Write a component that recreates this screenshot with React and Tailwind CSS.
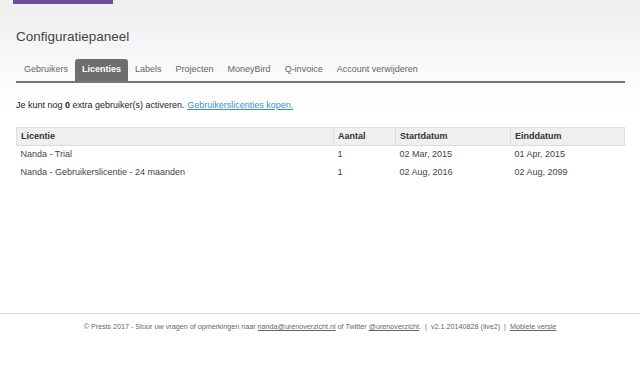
import React from 'react';

const tabs = ['Gebruikers', 'Licenties', 'Labels', 'Projecten', 'MoneyBird', 'Q-invoice', 'Account verwijderen'];

const rows = [
  { name: 'Nanda - Trial', count: '1', start: '02 Mar, 2015', end: '01 Apr, 2015' },
  { name: 'Nanda - Gebruikerslicentie - 24 maanden', count: '1', start: '02 Aug, 2016', end: '02 Aug, 2099' },
];

export default function App() {
  return (
    <div className="w-[640px] h-[380px] overflow-hidden bg-white text-[#333] font-['Liberation_Sans',Arial,sans-serif]">
      <div className="bg-gradient-to-b from-[#efefef] to-white h-[110px] px-4">
        <div className="ml-[-3px] w-[100px] h-[4px] bg-[#6b4c9f]" />
        <h1 className="mt-[24px] text-[13.5px] leading-[18px] text-[#444]">Configuratiepaneel</h1>

        <div className="mt-[14px] flex items-end border-b-2 border-[#777] w-[609px] h-[23px] pl-[1px]">
          {tabs.map((t) =>
            t === 'Licenties' ? (
              <div key={t} className="h-[22px] px-[7px] flex items-center bg-[#6e6e6e] text-white font-bold text-[9px] rounded-t-[3px]">
                {t}
              </div>
            ) : (
              <div key={t} className="h-[22px] px-[7px] flex items-center text-[#666] text-[9px]">
                {t}
              </div>
            )
          )}
        </div>

        <p className="mt-[16px] text-[9px] text-[#222]">
          Je kunt nog <b>0</b> extra gebruiker(s) activeren.{' '}
          <a className="text-[#3a8fd6] underline">Gebruikerslicenties kopen.</a>
        </p>
      </div>

      <div className="px-4 mt-[17px]">
        <table className="w-[609px] text-[9px] border-collapse">
          <thead>
            <tr className="bg-[#efefef] text-[#333] font-bold h-[18px]">
              <td className="border border-[#dcdcdc] pl-[4px] w-[317px]">Licentie</td>
              <td className="border border-[#dcdcdc] pl-[4px] w-[62px]">Aantal</td>
              <td className="border border-[#dcdcdc] pl-[4px] w-[115px]">Startdatum</td>
              <td className="border border-[#dcdcdc] pl-[4px]">Einddatum</td>
            </tr>
          </thead>
          <tbody className="text-[#444]">
            {rows.map((r) => (
              <tr key={r.name} className="h-[18px]">
                <td className="pl-[4px]">{r.name}</td>
                <td className="pl-[4px]">{r.count}</td>
                <td className="pl-[4px]">{r.start}</td>
                <td className="pl-[4px]">{r.end}</td>
              </tr>
            ))}
          </tbody>
        </table>
      </div>

      <div className="mt-[131px] border-t border-[#ddd] pt-[8px] text-center text-[7.2px] text-[#666]">
        © Presis 2017 - Stuur uw vragen of opmerkingen naar <span className="underline">nanda@urenoverzicht.nl</span> of Twitter{' '}
        <span className="underline">@urenoverzicht</span>. &nbsp;| &nbsp;v2.1.20140828 (live2) &nbsp;| &nbsp;<span className="underline">Mobiele versie</span>
      </div>
    </div>
  );
}
